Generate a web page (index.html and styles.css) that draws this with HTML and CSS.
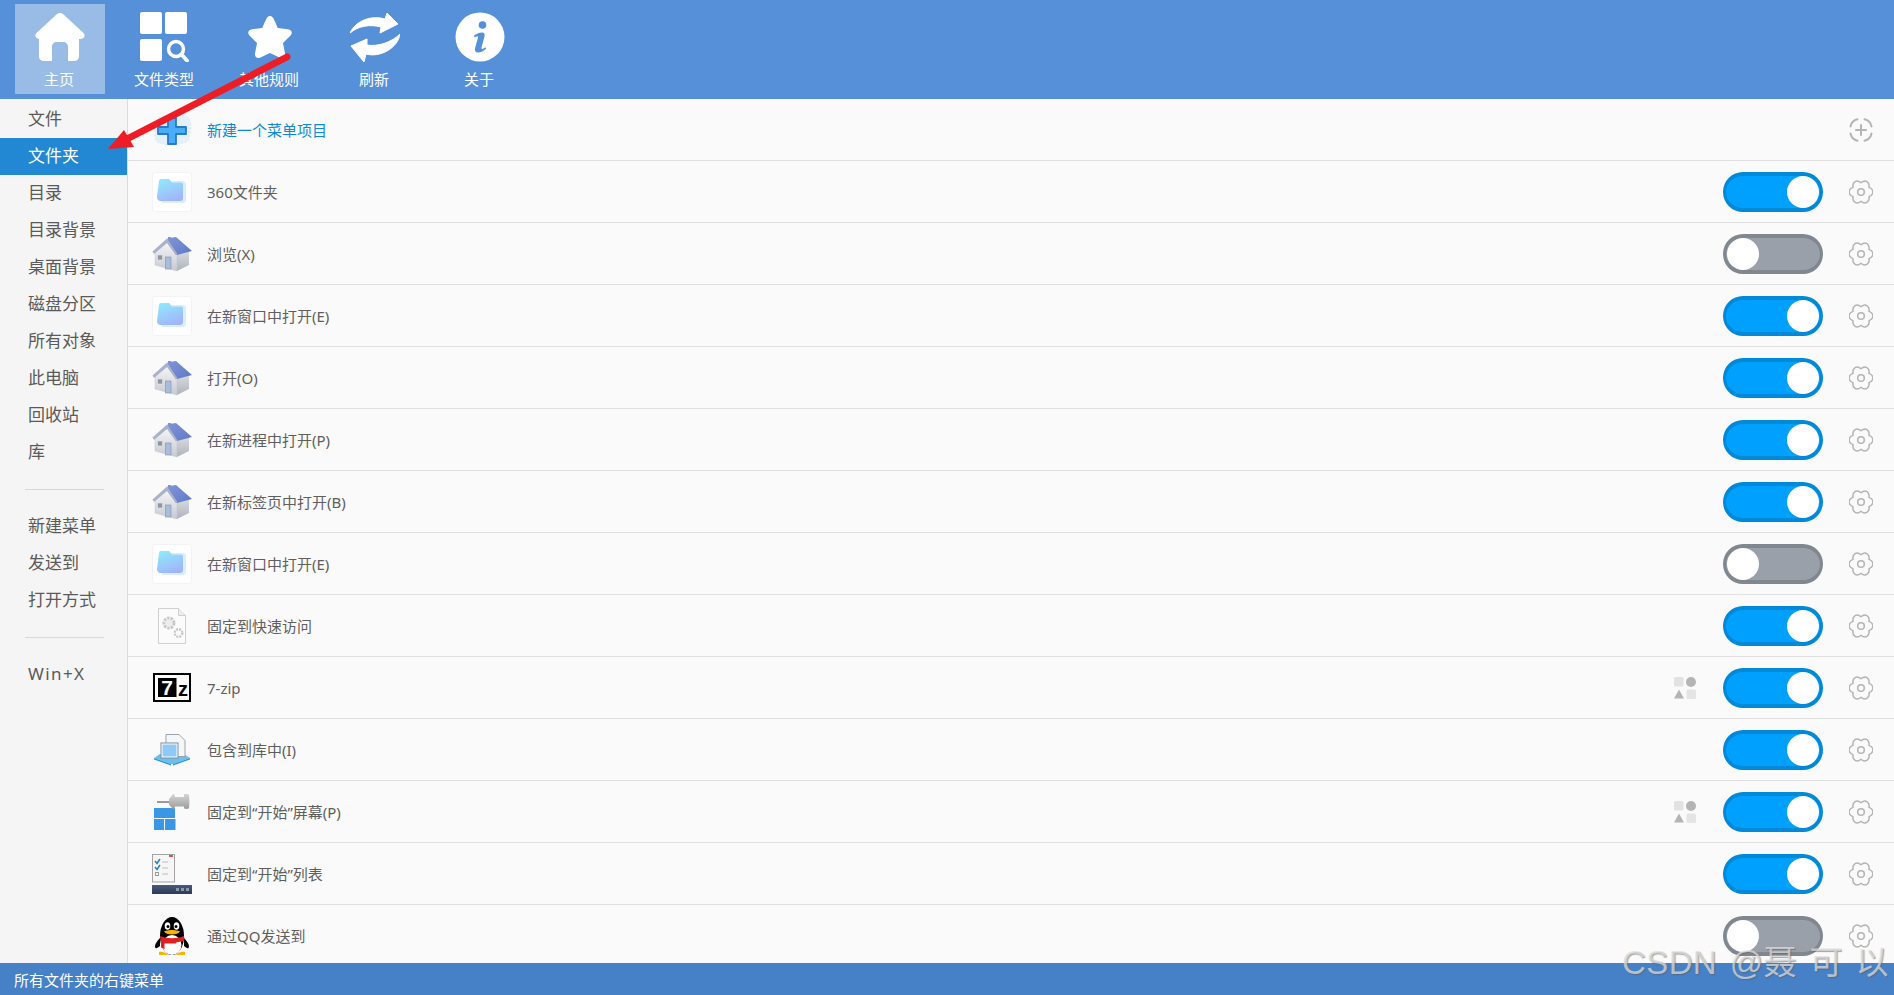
FILE: index.html
```html
<!DOCTYPE html>
<html lang="zh-CN">
<head>
<meta charset="utf-8">
<title>右键菜单</title>
<link rel="stylesheet" href="styles.css">
</head>
<body>
<svg class="defs" width="0" height="0" aria-hidden="true">
  <defs>
    <linearGradient id="fold" x1="0.2" y1="0" x2="0.6" y2="1"><stop offset="0" stop-color="#8fe9fb"/><stop offset="1" stop-color="#a3b4fb"/></linearGradient>
    <linearGradient id="roof" x1="0" y1="0" x2="1" y2="1"><stop offset="0" stop-color="#8095d8"/><stop offset="1" stop-color="#6079c6"/></linearGradient>
    <linearGradient id="wall" x1="0" y1="0" x2="0" y2="1"><stop offset="0" stop-color="#f6f7f8"/><stop offset="1" stop-color="#c6cad1"/></linearGradient>
    <linearGradient id="side" x1="0" y1="0" x2="0" y2="1"><stop offset="0" stop-color="#d8dbe0"/><stop offset="1" stop-color="#aeb3bc"/></linearGradient>
    <linearGradient id="bar" x1="0" y1="0" x2="0" y2="1"><stop offset="0" stop-color="#4a5a78"/><stop offset="1" stop-color="#2b3a55"/></linearGradient>
    <linearGradient id="pinm" x1="0" y1="0" x2="0" y2="1"><stop offset="0" stop-color="#d6d6d6"/><stop offset="1" stop-color="#9a9a9a"/></linearGradient>

    <symbol id="i-gear" viewBox="0 0 24 24">
      <path d="M12 2.800C16.170-.84 21.030 1.970 19.970 7.400C25.200 9.190 25.200 14.810 19.970 16.600C21.030 22.030 16.170 24.840 12 21.200C7.830 24.840 2.970 22.030 4.030 16.600C-1.200 14.810-1.200 9.190 4.030 7.400C2.970 1.970 7.830-.84 12 2.800z" fill="none" stroke="#b4b4b4" stroke-width="1.500" stroke-linejoin="round"/>
      <circle cx="12" cy="12" r="3.300" fill="none" stroke="#b4b4b4" stroke-width="1.500"/>
    </symbol>

    <symbol id="i-add" viewBox="0 0 24 24">
      <g fill="none" stroke="#b4b4b4" stroke-width="2" stroke-linecap="round">
        <path d="M1.500 8.500C2.200 5 4.500 2.200 8.500 1.300M15.500 1.300c4 .9 6.300 3.700 7 7.200M22.500 15.500c-.7 3.500-3 6.300-7 7.200M8.500 22.700c-4-.9-6.300-3.700-7-7.200"/>
        <path d="M7 12h10M12 7v10"/>
      </g>
    </symbol>

    <symbol id="i-shapes" viewBox="0 0 22 22">
      <rect x="0" y="0" width="9.500" height="9.500" rx="1.500" fill="#e2e2e2"/>
      <circle cx="17" cy="5" r="5" fill="#b4b4b4"/>
      <path d="M5 12.500l5 9H0z" fill="#b4b4b4"/>
      <rect x="12.500" y="12.500" width="9.500" height="9.500" rx="1.500" fill="#e4e4e4"/>
    </symbol>

    <symbol id="i-plus" viewBox="0 0 40 34">
      <path d="M4 8c3-6 10-5 14-5s14-2 18 2 3 10 2 15 0 9-7 10-14 2-20 1S3 28 3 21 2 12 4 8z" fill="#e4f1fd" stroke="#d5e9fa" stroke-dasharray="2 2"/>
      <path d="M16 5h8v9h10v7H24v10h-8V21H6v-7h10z" fill="#49aef7" stroke="#2a78c6" stroke-width="1.800" stroke-linejoin="round"/>
    </symbol>

    <symbol id="i-folder" viewBox="0 0 40 40">
      <rect x=".5" y=".5" width="39" height="39" rx="2" fill="#fff" stroke="#f3f3f3"/>
      <path d="M9 9h22a3 3 0 0 1 3 3v16a3 3 0 0 1-3 3H12a3 3 0 0 1-3-3z" fill="#c9eafe" opacity=".75"/>
      <path d="M7 9a2 2 0 0 1 2-2h8l3 3.500h9a2 2 0 0 1 2 2V26a3 3 0 0 1-3 3H9a4 4 0 0 1-4-4z" fill="url(#fold)"/>
    </symbol>

    <symbol id="i-house" viewBox="0 0 40 36">
      <path d="M25 18l12-3v14l-12 6z" fill="url(#side)"/>
      <path d="M3 16L15 5l10 13v17L3 29z" fill="url(#wall)" stroke="#c0c4cb" stroke-width=".5"/>
      <path d="M15 3l1-.5V1h3v.8L24 1l16 14-15 4z" fill="url(#roof)"/>
      <path d="M.5 15.500L15 2.500l10 15-1 2L15 7 2 18z" fill="#a9b2c9"/>
      <rect x="5.500" y="19" width="5" height="5" fill="#8e96a2" stroke="#e6e6e6" stroke-width=".6"/>
      <rect x="13.500" y="21" width="5.500" height="12" fill="#a8bcdc" stroke="#8391a8" stroke-width=".6"/>
    </symbol>

    <symbol id="i-doc" viewBox="0 0 28 36">
      <path d="M.5.500h20l7 7v28H.5z" fill="#fbfbfb" stroke="#cfcfcf"/>
      <path d="M20.500.500v7h7" fill="#eee" stroke="#cfcfcf"/>
      <circle cx="11" cy="15" r="5" fill="none" stroke="#c8c8c8" stroke-width="3" stroke-dasharray="2.500 1"/>
      <circle cx="11" cy="15" r="3" fill="#ececec"/>
      <circle cx="20.500" cy="25" r="3.800" fill="none" stroke="#c8c8c8" stroke-width="2.400" stroke-dasharray="2 1"/>
    </symbol>

    <symbol id="i-7z" viewBox="0 0 38 30">
      <rect x="1" y="1" width="36" height="27" fill="#fff" stroke="#000" stroke-width="2"/>
      <rect x="5" y="5" width="18.500" height="19" fill="#000"/>
      <text x="14.200" y="21.500" class="sz sz7">7</text>
      <text x="30" y="23" class="sz szz">z</text>
    </symbol>

    <symbol id="i-lib" viewBox="0 0 36 32">
      <path d="M0 24L6 20h24l6 4-17 6h-2z" fill="#6cc0ef"/>
      <path d="M0 24l17 6v1.500L0 25.500zM36 24l-17 6v1.500l17-6z" fill="#2f96d8"/>
      <path d="M12 .500h13l6 6v16H12z" fill="#f5f6f8" stroke="#9aa3ad"/>
      <rect x="7" y="9" width="17" height="15" fill="#fff" stroke="#7e8b98"/>
      <rect x="8.500" y="10.500" width="14" height="12" fill="#8ecaf5"/>
    </symbol>

    <symbol id="i-pin" viewBox="0 0 36 36">
      <rect x="0" y="14" width="21" height="10" fill="#3a97e6"/>
      <rect x="0" y="25" width="10" height="11" fill="#3a97e6"/>
      <rect x="11" y="25" width="10.500" height="11" fill="#3a97e6"/>
      <path d="M3 8h13" stroke="#7a7a7a" stroke-width="1.500"/>
      <path d="M15 5c2-2 2-2 4-5 1 0 2 1 2 3h9V0c2-.5 3 0 5 .5 .5 4 .5 10 0 14-2 .5-3 .5-5 0v-2h-9c0 2-1 3-2 3-2-3-2-3-4-5z" fill="url(#pinm)"/>
    </symbol>

    <symbol id="i-list" viewBox="0 0 40 40">
      <rect x=".5" y=".5" width="22" height="27.500" fill="#f6f6f6" stroke="#a4a4a4"/>
      <rect x="17" y="1" width="4" height="2" fill="#d05a5a"/>
      <path d="M3 7l2 2.500L8 5M3 13l2 2.500L8 11" fill="none" stroke="#2c7fd0" stroke-width="1.500"/>
      <path d="M10 8h6M10 14h6M10 20h6" stroke="#bdbdbd"/>
      <rect x="3.500" y="18.500" width="3" height="3" fill="none" stroke="#9a9a9a"/>
      <rect x="0" y="31" width="40" height="9" fill="url(#bar)"/>
      <rect x="24" y="34" width="3" height="3" fill="#8b97ad"/>
      <rect x="29" y="34" width="3" height="3" fill="#8b97ad"/>
      <rect x="34" y="34" width="3" height="3" fill="#8b97ad"/>
    </symbol>

    <symbol id="i-qq" viewBox="0 0 34 40">
      <ellipse cx="17" cy="20" rx="12" ry="19" fill="#000"/>
      <path d="M5 22C1 26-1 30 .5 32c1 .8 3-1 4.500-2zM29 22c4 4 6 8 4.500 10-1 .8-3-1-4.500-2z" fill="#000"/>
      <ellipse cx="17" cy="29" rx="9.500" ry="10" fill="#fff"/>
      <ellipse cx="12.500" cy="10" rx="2.800" ry="3.800" fill="#fff"/>
      <ellipse cx="21.500" cy="10" rx="2.800" ry="3.800" fill="#fff"/>
      <circle cx="13" cy="10.500" r="1.500" fill="#000"/>
      <circle cx="21" cy="10.500" r="1.500" fill="#000"/>
      <path d="M9 15.500c5-2 11-2 16 0-2 4-14 4-16 0z" fill="#f8b500"/>
      <path d="M5 20c8 3 16 3 24 0l.5 4c-3 1.500-5 2-8 2.300l-.5 1.200H9.500v5.500L6 31.500V25z" fill="#e02020"/>
      <path d="M4 36c3-1 7 .5 9 3H4zM30 36c-3-1-7 .5-9 3h9z" fill="#f8b500"/>
    </symbol>
  </defs>
</svg>

<div class="app">
  <header class="toolbar">
    <div class="tool tool-on">
      <svg class="tool-ic" viewBox="0 0 50 50"><path d="M25 1c1.500 0 2.500.7 3.500 1.600l20 18.400c2.500 2.700.5 6-2.500 6h-2v17c0 3.500-2 5-5 5H33V35c0-3-2-5-5-5h-6c-3 0-5 2-5 5v14H9c-3 0-5-1.500-5-5V27H4c-3 0-5-3.300-2.500-6l20-18.400C22.500 1.700 23.500 1 25 1z" fill="#fff"/></svg>
      <span class="tool-tx">主页</span>
    </div>
    <div class="tool">
      <svg class="tool-ic" viewBox="0 0 50 50"><rect x="0" y="0" width="22" height="22" rx="2" fill="#fff"/><rect x="25" y="0" width="22" height="22" rx="2" fill="#fff"/><rect x="0" y="27" width="22" height="22" rx="2" fill="#fff"/><circle cx="36" cy="37" r="7.500" fill="none" stroke="#fff" stroke-width="3.500"/><path d="M41.500 42.500l5.500 6" stroke="#fff" stroke-width="4" stroke-linecap="round"/></svg>
      <span class="tool-tx">文件类型</span>
    </div>
    <div class="tool">
      <svg class="tool-ic" viewBox="0 0 50 50"><path d="M25 4c2 0 3 1.500 4 3.500l3.800 8.500 10 1.200c4.500.8 5 4 2.500 6.500l-7.300 7.200 2 10.600c.5 4-2.200 5.500-5.500 4L25 41l-9.500 4.500c-3.300 1.500-6-.5-5.500-4l2-10.600-7.300-7.200c-2.500-2.500-2-5.700 2.500-6.500l10-1.200 3.800-8.500C22 5.500 23 4 25 4z" fill="#fff"/></svg>
      <span class="tool-tx">其他规则</span>
    </div>
    <div class="tool">
      <svg class="tool-ic" viewBox="0 0 50 50"><path d="M0 21C6 8 22 3 35 7L37 1l11 11-18 9 1-6C20 12 8 14 0 21z" fill="#fff" stroke="#fff" stroke-linejoin="round"/><path d="M50 22c-2 14-20 24-34 20l-2 8L1 34l16-7v6c11 2 25-3 33-11z" fill="#fff" stroke="#fff" stroke-linejoin="round"/></svg>
      <span class="tool-tx">刷新</span>
    </div>
    <div class="tool">
      <svg class="tool-ic" viewBox="0 0 50 50"><circle cx="25" cy="25" r="24.500" fill="#fff"/><circle cx="27.500" cy="13" r="3.800" fill="#5590d8"/><path d="M19 23.500c2-1.500 5-3 8-3 2.500 0 3 2 2.500 4l-3 11c-.3 1.300.5 1.800 1.500 1.200l2.500-1.500.6 1.500c-2.500 2.300-5.100 3.800-8.100 3.800-2.600 0-3.500-2-3-4l3-11c.3-1.200-.5-1.700-1.400-1.100l-2 1.100z" fill="#5590d8"/></svg>
      <span class="tool-tx">关于</span>
    </div>
  </header>

  <div class="main">
    <nav class="side">
      <div class="side-it">文件</div>
      <div class="side-it side-on">文件夹</div>
      <div class="side-it">目录</div>
      <div class="side-it">目录背景</div>
      <div class="side-it">桌面背景</div>
      <div class="side-it">磁盘分区</div>
      <div class="side-it">所有对象</div>
      <div class="side-it">此电脑</div>
      <div class="side-it">回收站</div>
      <div class="side-it">库</div>
      <hr class="side-sep">
      <div class="side-it">新建菜单</div>
      <div class="side-it">发送到</div>
      <div class="side-it">打开方式</div>
      <hr class="side-sep">
      <div class="side-it side-lat">Win+X</div>
    </nav>

    <section class="list">
      <div class="row">
        <svg class="ic ic-plus"><use href="#i-plus"/></svg>
        <span class="name name-new">新建一个菜单项目</span>
        <svg class="gear"><use href="#i-add"/></svg>
      </div>
      <div class="row">
        <svg class="ic"><use href="#i-folder"/></svg>
        <span class="name">360文件夹</span>
        <span class="sw sw-on"></span>
        <svg class="gear"><use href="#i-gear"/></svg>
      </div>
      <div class="row">
        <svg class="ic ic-house"><use href="#i-house"/></svg>
        <span class="name">浏览(X)</span>
        <span class="sw"></span>
        <svg class="gear"><use href="#i-gear"/></svg>
      </div>
      <div class="row">
        <svg class="ic"><use href="#i-folder"/></svg>
        <span class="name">在新窗口中打开(E)</span>
        <span class="sw sw-on"></span>
        <svg class="gear"><use href="#i-gear"/></svg>
      </div>
      <div class="row">
        <svg class="ic ic-house"><use href="#i-house"/></svg>
        <span class="name">打开(O)</span>
        <span class="sw sw-on"></span>
        <svg class="gear"><use href="#i-gear"/></svg>
      </div>
      <div class="row">
        <svg class="ic ic-house"><use href="#i-house"/></svg>
        <span class="name">在新进程中打开(P)</span>
        <span class="sw sw-on"></span>
        <svg class="gear"><use href="#i-gear"/></svg>
      </div>
      <div class="row">
        <svg class="ic ic-house"><use href="#i-house"/></svg>
        <span class="name">在新标签页中打开(B)</span>
        <span class="sw sw-on"></span>
        <svg class="gear"><use href="#i-gear"/></svg>
      </div>
      <div class="row">
        <svg class="ic"><use href="#i-folder"/></svg>
        <span class="name">在新窗口中打开(E)</span>
        <span class="sw"></span>
        <svg class="gear"><use href="#i-gear"/></svg>
      </div>
      <div class="row">
        <svg class="ic ic-doc"><use href="#i-doc"/></svg>
        <span class="name">固定到快速访问</span>
        <span class="sw sw-on"></span>
        <svg class="gear"><use href="#i-gear"/></svg>
      </div>
      <div class="row">
        <svg class="ic ic-7z"><use href="#i-7z"/></svg>
        <span class="name">7-zip</span>
        <svg class="shapes"><use href="#i-shapes"/></svg>
        <span class="sw sw-on"></span>
        <svg class="gear"><use href="#i-gear"/></svg>
      </div>
      <div class="row">
        <svg class="ic ic-lib"><use href="#i-lib"/></svg>
        <span class="name">包含到库中(I)</span>
        <span class="sw sw-on"></span>
        <svg class="gear"><use href="#i-gear"/></svg>
      </div>
      <div class="row">
        <svg class="ic ic-pin"><use href="#i-pin"/></svg>
        <span class="name">固定到“开始”屏幕(P)</span>
        <svg class="shapes"><use href="#i-shapes"/></svg>
        <span class="sw sw-on"></span>
        <svg class="gear"><use href="#i-gear"/></svg>
      </div>
      <div class="row">
        <svg class="ic"><use href="#i-list"/></svg>
        <span class="name">固定到“开始”列表</span>
        <span class="sw sw-on"></span>
        <svg class="gear"><use href="#i-gear"/></svg>
      </div>
      <div class="row">
        <svg class="ic ic-qq"><use href="#i-qq"/></svg>
        <span class="name">通过QQ发送到</span>
        <span class="sw"></span>
        <svg class="gear"><use href="#i-gear"/></svg>
      </div>
    </section>
  </div>

  <footer class="status">所有文件夹的右键菜单</footer>

  <svg class="arrow" viewBox="0 0 300 160" aria-hidden="true">
    <path d="M287 57L125 140" stroke="#ee1c25" stroke-width="7" stroke-linecap="round"/>
    <path d="M108 149L124 130 134 147z" fill="#ee1c25"/>
  </svg>
  <div class="mark">CSDN @聂 可 以</div>
</div>
</body>
</html>
```

FILE: styles.css
```css
* { box-sizing: border-box; }

html, body {
  margin: 0;
  height: 100%;
  overflow: hidden;
}

body {
  font-family: "Noto Sans", "Noto Sans CJK SC", sans-serif;
  color: #5f5f5f;
  background: #fafafa;
}

.defs { position: absolute; }

.app {
  position: relative;
  height: 100vh;
  display: flex;
  flex-direction: column;
  overflow: hidden;
}

/* toolbar */
.toolbar {
  flex: 0 0 99px;
  display: flex;
  gap: 15px;
  padding: 4px 0 5px 15px;
  background: #5590d8;
}

.tool {
  width: 90px;
  display: flex;
  flex-direction: column;
  align-items: center;
  padding-top: 8px;
  color: #fff;
}

.tool-on { background: rgba(255, 255, 255, .4); }

.tool-ic {
  width: 50px;
  height: 50px;
  flex: none;
}

.tool-tx {
  font-size: 15px;
  line-height: 20px;
  margin-top: 7px;
  margin-right: 2px;
}

/* main */
.main {
  flex: 1;
  min-height: 0;
  display: flex;
}

.side {
  flex: 0 0 128px;
  padding-top: 2px;
  background: #f5f5f5;
  border-right: 1px solid #dcdcdc;
}

.side-it {
  height: 37px;
  padding-left: 28px;
  font-size: 17px;
  line-height: 36px;
  color: #5a5a5a;
}

.side-on {
  background: #2288d3;
  color: #fff;
}

.side-lat { letter-spacing: 1.4px; }

.side-sep {
  height: 1px;
  margin: 18px 23px 18px 25px;
  border: 0;
  background: #d8d8d8;
}

/* list */
.list {
  flex: 1;
  min-width: 0;
  overflow: hidden;
}

.row {
  height: 62px;
  display: flex;
  align-items: center;
  padding: 0 21px 0 24px;
  border-bottom: 1px solid #e0e0e0;
}

.ic {
  flex: none;
  width: 40px;
  height: 40px;
}

.ic-house { height: 36px; }
.ic-plus { height: 34px; }
.ic-doc { height: 36px; }
.ic-7z { width: 38px; height: 30px; margin: 0 1px; }
.ic-lib { width: 36px; height: 32px; margin: 0 2px; }
.ic-pin { width: 36px; height: 36px; margin: 0 2px; }

.name {
  flex: 1;
  margin-left: 15px;
  font-size: 15px;
  color: #5f5f5f;
}

.name-new { color: #0e8ad8; }

.shapes {
  flex: none;
  width: 22px;
  height: 22px;
  margin-right: 27px;
}

.sw {
  position: relative;
  flex: none;
  width: 100px;
  height: 40px;
  border-radius: 20px;
  background: #9aa0a9;
  border: 3px solid #81878f;
  border-top-width: 4px;
  border-bottom-width: 4px;
}

.sw::after {
  content: "";
  position: absolute;
  left: 1px;
  top: 0;
  width: 32px;
  height: 32px;
  border-radius: 50%;
  background: #fff;
}

.sw-on {
  background: #00a0ff;
  border-color: #0089d9;
}

.sw-on::after {
  left: auto;
  right: 1px;
}

.gear {
  flex: none;
  width: 24px;
  height: 24px;
  margin-left: 26px;
}

.sz {
  font-family: "Liberation Sans", sans-serif;
  font-weight: 700;
  text-anchor: middle;
}
.sz7 { font-size: 21px; fill: #fff; }
.szz { font-size: 20px; fill: #000; }

/* status */
.status {
  flex: 0 0 32px;
  min-height: 0;
  overflow: hidden;
  padding-left: 14px;
  font-size: 15px;
  line-height: 34px;
  color: #fff;
  background: #4680c6;
}

/* overlays */
.arrow {
  position: absolute;
  left: 0;
  top: 0;
  width: 300px;
  height: 160px;
}

.mark {
  position: absolute;
  left: 1622px;
  top: 939px;
  font-family: "Liberation Sans", "Noto Sans CJK SC", sans-serif;
  font-size: 33px;
  line-height: 48px;
  letter-spacing: .4px;
  word-spacing: 3px;
  white-space: nowrap;
  color: rgba(225, 225, 225, .72);
  text-shadow: 1px 1px 1px rgba(90, 90, 90, .55);
}
```
